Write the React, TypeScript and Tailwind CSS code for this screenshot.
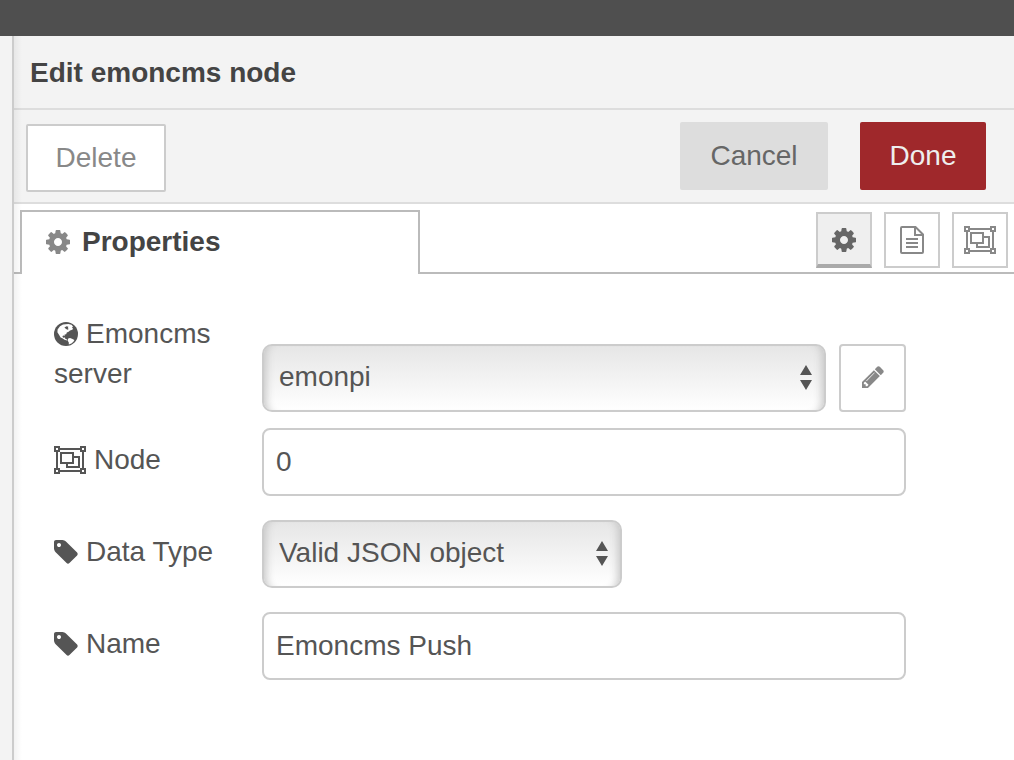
import * as React from 'react';

interface IconProps {
  className?: string;
}

function CogIcon({ className }: IconProps) {
  return (
    <svg viewBox="128 128 1536 1536" fill="currentColor" aria-hidden="true" className={className}>
      <path d="M1152 896q0-106-75-181t-181-75-181 75-75 181 75 181 181 75 181-75 75-181zm512-109v222q0 12-8 23t-20 13l-185 28q-19 54-39 91 35 50 107 138 10 12 10 25t-9 23q-27 37-99 108t-94 71q-12 0-26-9l-138-108q-44 23-91 38-16 136-29 186-7 28-36 28h-222q-14 0-24.5-8.5t-11.5-21.5l-28-184q-49-16-90-37l-141 107q-10 9-25 9-14 0-25-11-126-114-165-168-7-10-7-23 0-12 8-23 15-21 51-66.5t54-70.5q-27-50-41-99l-183-27q-13-2-21-12.5t-8-23.5v-222q0-12 8-23t19-13l186-28q14-46 39-92-40-57-107-138-10-12-10-24 0-10 9-23 26-36 98.5-107.5t94.5-71.5q13 0 26 10l138 107q44-23 91-38 16-136 29-186 7-28 36-28h222q14 0 24.5 8.5t11.5 21.5l28 184q49 16 90 37l142-107q9-9 24-9 13 0 25 10 129 119 165 170 7 8 7 22 0 12-8 23-15 21-51 66.5t-54 70.5q26 50 41 98l183 28q13 2 21 12.5t8 23.5z" />
    </svg>
  );
}

function TagIcon({ className }: IconProps) {
  return (
    <svg viewBox="128 128 1536 1536" fill="currentColor" aria-hidden="true" className={className}>
      <path d="M576 448q0-53-37.5-90.5t-90.5-37.5-90.5 37.5-37.5 90.5 37.5 90.5 90.5 37.5 90.5-37.5 37.5-90.5zm1067 576q0 53-37 90l-491 492q-39 37-91 37-53 0-90-37l-715-716q-38-37-64.5-101t-26.5-117v-416q0-52 38-90t90-38h416q53 0 117 26.5t102 64.5l715 714q37 39 37 91z" />
    </svg>
  );
}

function PencilIcon({ className }: IconProps) {
  return (
    <svg viewBox="128 128 1536 1536" fill="currentColor" aria-hidden="true" className={className}>
      <path d="M491 1536l91-91-235-235-91 91v107h128v128h107zm523-928q0-22-22-22-10 0-17 7l-542 542q-7 7-7 17 0 22 22 22 10 0 17-7l542-542q7-7 7-17zm-54-192l416 416-832 832h-416v-416zm683 96q0 53-37 90l-166 166-416-416 166-165q36-38 90-38 53 0 91 38l235 234q37 39 37 91z" />
    </svg>
  );
}

function GlobeIcon({ className }: IconProps) {
  return (
    <svg viewBox="0 0 24 24" aria-hidden="true" className={className}>
      <circle cx="12" cy="12" r="12" fill="currentColor" />
      <path
        fill="#fff"
        d="M6 4.2L9 2.6L11.5 2.2L14.5 1.9L17.5 2.8L19 4.4L18 5.4L19.2 7L17.6 8L16 8.4L14.6 9.8L12.8 10.6L12.2 12.2L10.6 12.6L10.8 13.8L9 13.6L8.4 14.8L9.4 15.8L11 15.4L11.4 17L13.2 17.6L12.8 18.4L10.6 17.8L8.4 16.2L6.6 15.6L5 12.8L3.4 10.2L3.6 7.6Z"
      />
      <path fill="currentColor" d="M10.4 5.4L12.6 4.2L14.4 4.8L13.8 6.2L14.8 7L13.4 7.8L11.8 6.8Z" />
      <path fill="#fff" d="M14.2 16.6L16 16L18 16.8L20.4 18L19.4 19.8L17.4 21.6L14.8 22.6L14.8 20.4L13.6 18.6Z" />
    </svg>
  );
}

function FileTextIcon({ className }: IconProps) {
  return (
    <svg viewBox="0 0 24 28" fill="none" stroke="currentColor" strokeWidth="2" aria-hidden="true" className={className}>
      <path d="M2 1H15.5L23 8.5V26Q23 27 22 27H2Q1 27 1 26V2Q1 1 2 1Z" />
      <path d="M15 1V9H23M6 13H18M6 17H18M6 21H18" />
    </svg>
  );
}

function ObjectGroupIcon({ className }: IconProps) {
  return (
    <svg viewBox="0 0 32 28" fill="none" stroke="currentColor" strokeWidth="2" aria-hidden="true" className={className}>
      <path d="M6 3H26M6 25H26M3 6V22M29 6V22" />
      <path d="M1 1H5V5H1ZM27 1H31V5H27ZM1 23H5V27H1ZM27 23H31V27H27Z" />
      <path d="M7 7H19V17H7ZM19 11H25V21H13V17" />
    </svg>
  );
}

interface SelectBoxProps {
  id: string;
  options: string[];
  className?: string;
}

function SelectBox({ id, options, className }: SelectBoxProps) {
  return (
    <div className={`relative ${className ?? ''}`}>
      <select
        id={id}
        className="block h-[68px] w-full appearance-none rounded-[10px] border-2 border-[#ccc] bg-linear-to-b from-[#e6e6e6] to-white pr-12 pb-0.5 pl-[15px] text-[#555] shadow-[inset_10px_0_8px_-8px_#c4c4c4,inset_-10px_0_8px_-8px_#c4c4c4]"
      >
        {options.map((option) => (
          <option key={option}>{option}</option>
        ))}
      </select>
      <svg
        viewBox="0 0 12 25"
        fill="currentColor"
        aria-hidden="true"
        className="pointer-events-none absolute top-[21px] right-[14px] h-[25px] w-3 text-[#555]"
      >
        <path d="M6 0L12 10H0ZM0 15H12L6 25Z" />
      </svg>
    </div>
  );
}

const inputClass =
  'block h-[68px] w-full rounded-lg border-2 border-[#ccc] bg-white px-3 text-[#555]';

const labelClass = 'w-[208px] shrink-0 pr-8 leading-10 text-[#555]';

export default function App() {
  const [node, setNode] = React.useState('0');
  const [name, setName] = React.useState('Emoncms Push');

  return (
    <div className="flex min-h-screen flex-col bg-[#f3f3f3] font-['Liberation_Sans',Arial,sans-serif] text-[28px] leading-10">
      <header className="h-9 bg-[#4f4f4f]" />
      <main className="relative ml-3 flex grow flex-col border-l-2 border-[#ccc] bg-white">
        {/* soft shade along the tray's left edge */}
        <div className="pointer-events-none absolute inset-y-0 left-0 w-2 bg-linear-to-r from-black/5 to-transparent" />

        <div className="border-b-2 border-[#ddd] bg-[#f3f3f3] pt-[17px] pb-[15px] pl-4">
          <h1 className="font-bold text-[#444]">Edit emoncms node</h1>
        </div>

        <div className="flex items-start border-b-2 border-[#ddd] bg-[#f3f3f3] pt-3 pr-7 pb-2.5 pl-3">
          <button
            type="button"
            className="mt-0.5 h-[68px] w-[140px] rounded-xs border-2 border-[#ccc] bg-white text-[#888]"
          >
            Delete
          </button>
          <button type="button" className="ml-auto h-[68px] w-[148px] rounded-xs bg-[#ddd] text-[#666]">
            Cancel
          </button>
          <button type="button" className="ml-8 h-[68px] w-[126px] rounded-xs bg-[#9f282b] text-[#eee]">
            Done
          </button>
        </div>

        <div className="flex pt-1.5">
          <div className="w-2 rounded-br-xs border-b-2 border-[#bbb]" />
          <button
            type="button"
            className="-ml-0.5 flex h-16 w-[400px] items-center border-2 border-b-0 border-[#bbb] bg-white pb-0.5 pl-6 font-bold text-[#444]"
          >
            <CogIcon className="mr-3 size-6 text-[#888]" />
            Properties
          </button>
          <div className="flex grow justify-end gap-3 border-b-2 border-[#bbb] pt-0.5 pr-1.5">
            <button
              type="button"
              aria-label="Properties"
              className="flex h-14 w-14 justify-center border-2 border-b-4 border-[#ccc] border-b-[#aaa] bg-[#efefef] pt-3.5 text-[#666]"
            >
              <CogIcon className="size-6" />
            </button>
            <button
              type="button"
              aria-label="Description"
              className="flex h-14 w-14 justify-center border-2 border-[#ccc] bg-white pt-3 text-[#888]"
            >
              <FileTextIcon className="h-7 w-6" />
            </button>
            <button
              type="button"
              aria-label="Appearance"
              className="flex h-14 w-14 justify-center border-2 border-[#ccc] bg-white pt-3 text-[#888]"
            >
              <ObjectGroupIcon className="h-7 w-8 shrink-0" />
            </button>
          </div>
        </div>

        <form className="flex flex-col pt-10 pr-[108px] pl-10">
          <div className="flex">
            <label htmlFor="server" className={labelClass}>
              <GlobeIcon className="mr-2 inline-block size-6 align-[-3px]" />
              Emoncms server
            </label>
            <div className="flex grow gap-[13px] pt-[30px]">
              <SelectBox id="server" options={['emonpi']} className="grow" />
              <button
                type="button"
                aria-label="Edit server"
                className="flex h-[68px] w-[67px] items-center justify-center rounded-sm border-2 border-[#ccc] bg-white pb-0.5 text-[#888]"
              >
                <PencilIcon className="size-[22px]" />
              </button>
            </div>
          </div>

          <div className="mt-4 flex">
            <label htmlFor="node" className={`${labelClass} pt-3`}>
              <ObjectGroupIcon className="mr-2 inline-block h-7 w-8 align-[-5px]" />
              Node
            </label>
            <input
              id="node"
              value={node}
              onChange={(e) => setNode(e.target.value)}
              className={inputClass}
            />
          </div>

          <div className="mt-6 flex">
            <label htmlFor="datatype" className={`${labelClass} pt-3`}>
              <TagIcon className="mr-2 inline-block size-6 align-[-3px]" />
              Data Type
            </label>
            <SelectBox id="datatype" options={['Valid JSON object']} className="w-[360px]" />
          </div>

          <div className="mt-6 flex">
            <label htmlFor="name" className={`${labelClass} pt-3`}>
              <TagIcon className="mr-2 inline-block size-6 align-[-3px]" />
              Name
            </label>
            <input
              id="name"
              value={name}
              onChange={(e) => setName(e.target.value)}
              className={inputClass}
            />
          </div>
        </form>
      </main>
    </div>
  );
}
